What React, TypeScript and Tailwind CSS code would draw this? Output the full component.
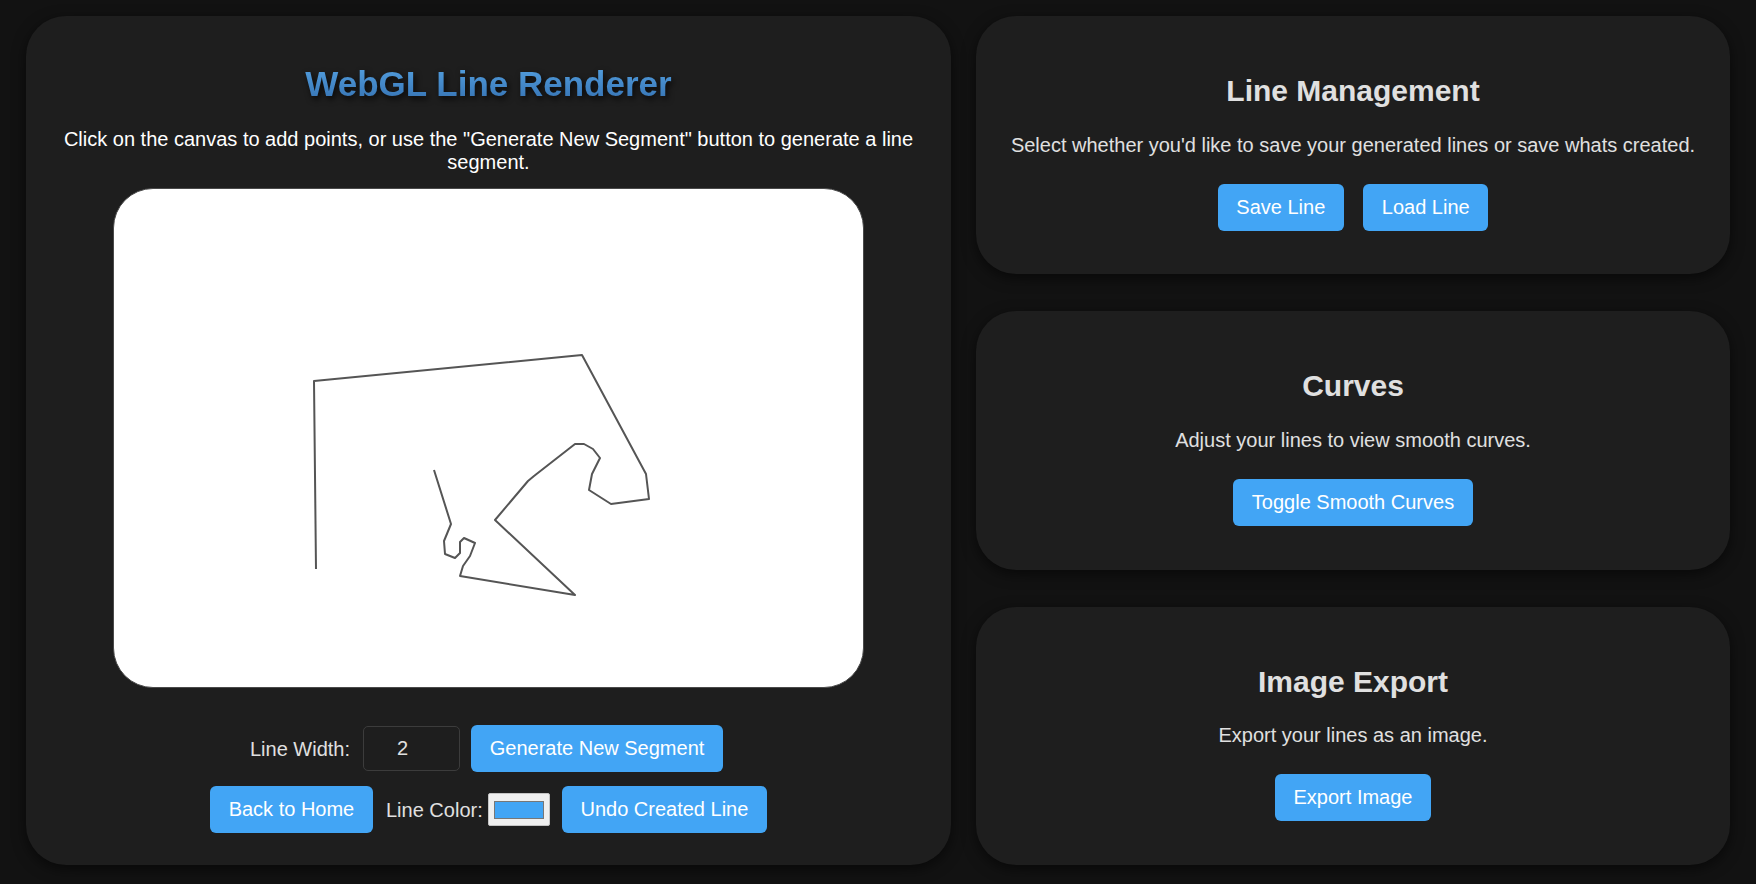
import type { ReactNode } from 'react'

const FONT = { fontFamily: '"Liberation Sans", Arial, Helvetica, sans-serif' }

// traced polyline in canvas pixels (750x500)
const LINE_POINTS: [number, number][] = [
  [202, 380], [200, 192], [468, 166], [532, 285], [535, 310], [497, 315],
  [475, 301], [478, 285], [486, 269], [479, 260], [470, 255], [461, 255],
  [420, 287], [414, 292], [381, 331], [461, 406], [346, 387], [349, 377],
  [356, 367], [361, 354], [350, 349], [346, 353], [346, 364], [341, 369],
  [331, 365], [330, 352], [337, 335], [320, 281],
]

function Button({ children, className = '' }: { children: ReactNode; className?: string }) {
  return (
    <button
      className={`rounded-[6px] bg-[#42a5f5] px-[18.75px] py-[12px] text-[20px] leading-[23px] text-white ${className}`}
    >
      {children}
    </button>
  )
}

function Panel({ title, text, children }: { title: string; text: string; children: ReactNode }) {
  return (
    <section className="flex flex-1 flex-col items-center rounded-[40px] bg-[#1e1e1e] pt-[58px] shadow-[0_4px_14px_rgba(0,0,0,0.55)]">
      <h2 className="text-[30px] font-bold leading-[34.5px] text-[#e0e0e0]">{title}</h2>
      <p className="mt-[25px] text-[20px] leading-[23px] text-[#e0e0e0]">{text}</p>
      <div className="mt-[27px] flex items-center justify-center gap-[19px]">{children}</div>
    </section>
  )
}

function LineCanvas() {
  const pts = LINE_POINTS.map(([x, y]) => `${x},${y}`).join(' ')
  return (
    <div className="mt-[14px] h-[500px] w-[751px] overflow-hidden rounded-[40px] border border-[#4a4a4a] bg-white">
      <svg width="751" height="500" viewBox="0 0 751 500">
        <polyline points={pts} fill="none" stroke="#555" strokeWidth="2" strokeLinejoin="round" />
      </svg>
    </div>
  )
}

export default function App() {
  return (
    <div style={FONT} className="flex min-h-[884px] gap-[25px] bg-[#121212] px-[26px] pt-[16px] pb-[19px] text-[20px]">
      {/* Renderer */}
      <main className="flex w-[925px] shrink-0 flex-col items-center rounded-[40px] bg-[#1e1e1e] px-[30px] pt-[48px] pb-[31px] shadow-[0_4px_14px_rgba(0,0,0,0.55)]">
        <h1 className="bg-gradient-to-b from-[#55a2e2] to-[#3470b0] bg-clip-text text-[35px] font-bold leading-[40px] text-transparent drop-shadow-[2px_3px_3px_rgba(0,0,0,0.75)]">
          WebGL Line Renderer
        </h1>
        <p className="mt-[24px] text-center text-[20px] leading-[23px] text-white">
          Click on the canvas to add points, or use the "Generate New Segment" button to generate a line segment.
        </p>

        <LineCanvas />

        <div className="mt-[37px] flex items-center justify-center pr-[4px]">
          <span className="mr-[13px] text-[#e0e0e0]">Line Width:</span>
          <input
            readOnly
            value="2"
            className="mr-[11px] h-[45px] w-[97px] rounded-[5px] border border-[#3c3c3c] bg-[#1e1e1e] pl-[33px] text-[20px] text-[#e0e0e0] outline-none"
          />
          <Button>Generate New Segment</Button>
        </div>

        <div className="mt-[14px] flex items-center justify-center">
          <Button className="mr-[13px]">Back to Home</Button>
          <span className="mr-[5px] text-[#e0e0e0]">Line Color:</span>
          <div className="mr-[12px] flex h-[33px] w-[62px] items-center justify-center rounded-[2px] border border-[#c4c4c4] bg-[#efefef]">
            <div className="h-[18px] w-[50px] border border-[#777] bg-[#42a5f5]" />
          </div>
          <Button>Undo Created Line</Button>
        </div>
      </main>

      {/* Side panels */}
      <aside className="flex flex-1 flex-col gap-[37px]">
        <Panel title="Line Management" text="Select whether you'd like to save your generated lines or save whats created.">
          <Button>Save Line</Button>
          <Button>Load Line</Button>
        </Panel>
        <Panel title="Curves" text="Adjust your lines to view smooth curves.">
          <Button>Toggle Smooth Curves</Button>
        </Panel>
        <Panel title="Image Export" text="Export your lines as an image.">
          <Button>Export Image</Button>
        </Panel>
      </aside>
    </div>
  )
}
